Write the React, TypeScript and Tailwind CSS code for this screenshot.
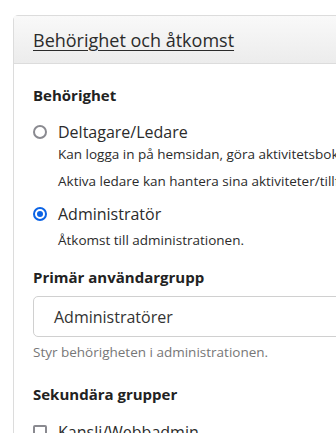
import React from "react";

export default function App() {
  return (
    <div className="w-[336px] h-[433px] overflow-hidden bg-white" style={{ fontFamily: '"Open Sans", sans-serif' }}>
      <div className="ml-[13px] mt-[15px] w-[400px] rounded-tl-[5px] border border-[#dcdcdc] bg-white">
        <div className="flex h-[48px] items-center border-b border-[#dcdcdc] bg-gradient-to-b from-[#f9f9f9] to-[#ececec] pl-[19px]">
          <span className="text-[18px] leading-[24px] text-[#2b2b2b] underline underline-offset-[3px] decoration-[1px]">Behörighet och åtkomst</span>
        </div>
        <div className="pl-[19px] pt-[19px] text-[#2b2b2b]">
          <div className="text-[15px] font-bold leading-[24px] text-[#222]">Behörighet</div>
          <div className="mt-[13px] flex items-center gap-[11px]">
            <span className="h-[14px] w-[14px] rounded-full border-2 border-[#8a8a90]" />
            <span className="text-[16px] leading-[24px]">Deltagare/Ledare</span>
          </div>
          <div className="ml-[25px] flex flex-col gap-[7px] text-[13.5px] leading-[20px] whitespace-nowrap">
            <div>Kan logga in på hemsidan, göra aktivitetsbokningar</div>
            <div>Aktiva ledare kan hantera sina aktiviteter/tillfällen</div>
          </div>
          <div className="mt-[11px] flex items-center gap-[11px]">
            <span className="flex h-[14px] w-[14px] items-center justify-center rounded-full border-2 border-[#0b63e5] bg-white">
              <span className="h-[6px] w-[6px] rounded-full bg-[#0b63e5]" />
            </span>
            <span className="text-[16px] leading-[24px]">Administratör</span>
          </div>
          <div className="ml-[25px] mt-[4px] text-[13.5px] leading-[20px]">Åtkomst till administrationen.</div>
          <div className="mt-[15px] text-[15px] font-bold leading-[24px] text-[#222]">Primär användargrupp</div>
          <div className="mt-[7px] flex h-[41px] items-center rounded-[5px] border border-[#d0d0d0] pl-[20px] text-[16px] text-[#333]">Administratörer</div>
          <div className="mt-[5px] text-[13.5px] leading-[20px] text-[#777]">Styr behörigheten i administrationen.</div>
          <div className="mt-[20px] text-[15px] font-bold leading-[24px] text-[#222]">Sekundära grupper</div>
          <div className="mt-[14px] flex items-center gap-[11px]">
            <span className="h-[14px] w-[14px] rounded-[2px] border-2 border-[#8a8a90]" />
            <span className="text-[16px] leading-[24px]">Kansli/Webbadmin</span>
          </div>
        </div>
      </div>
    </div>
  );
}
